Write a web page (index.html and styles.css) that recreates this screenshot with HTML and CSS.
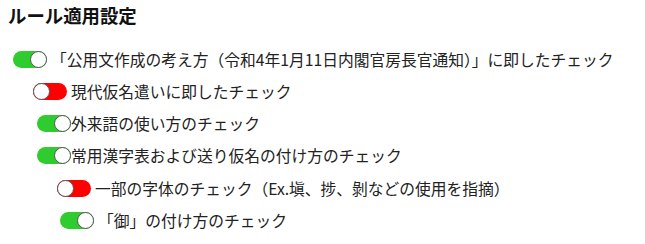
FILE: index.html
```html
<!DOCTYPE html>
<html lang="ja">
<head>
<meta charset="utf-8">
<link rel="stylesheet" href="styles.css">
</head>
<body>
<h1 class="title">ルール適用設定</h1>
<ul class="rules">
  <li class="rule lv0"><span class="toggle on"></span><span class="label sp">「公用文作成の考え方（令和4年1月11日内閣官房長官通知）」に即したチェック</span></li>
  <li class="rule lv1"><span class="toggle off"></span><span class="label sp">現代仮名遣いに即したチェック</span></li>
  <li class="rule lv1b"><span class="toggle on"></span><span class="label">外来語の使い方のチェック</span></li>
  <li class="rule lv1b"><span class="toggle on"></span><span class="label">常用漢字表および送り仮名の付け方のチェック</span></li>
  <li class="rule lv2"><span class="toggle off"></span><span class="label sp">一部の字体のチェック（Ex.塡、捗、剝などの使用を指摘）</span></li>
  <li class="rule lv2b"><span class="toggle on"></span><span class="label sp">「御」の付け方のチェック</span></li>
</ul>
</body>
</html>
```
FILE: styles.css
```css
body {
  margin: 0;
  padding: 0 8px;
  background: #ffffff;
  color: #1a1a1a;
  font-family: "Noto Sans CJK JP", "Noto Sans", sans-serif;
}
.title {
  margin: 0;
  padding-top: 3px;
  font-size: 18.4px;
  line-height: 24px;
  font-weight: bold;
  color: #111;
}
.rules {
  list-style: none;
  margin: 17px 0 0 0;
  padding: 0;
}
.rule {
  display: flex;
  align-items: center;
  height: 32.4px;
  font-size: 15.75px;
  color: #222;
}
.rule:first-child { height: 31px; }
.lv0 { padding-left: 5px; }
.lv1 { padding-left: 25px; }
.lv1b { padding-left: 29px; }
.lv2 { padding-left: 49px; }
.lv2b { padding-left: 52px; }
.label.sp { margin-left: 4px; }
.toggle {
  position: relative;
  flex: none;
  width: 34px;
  height: 17px;
  border-radius: 9px;
  box-sizing: border-box;
}
.toggle.on { background: #2ecc2e; }
.toggle.off { background: #ff0000; }
.toggle::after {
  content: "";
  position: absolute;
  top: 0;
  width: 17px;
  height: 17px;
  border-radius: 50%;
  background: #fff;
  border: 1.5px solid #555;
  box-sizing: border-box;
}
.toggle.on::after { right: 0; }
.toggle.off::after { left: 0; }
```
